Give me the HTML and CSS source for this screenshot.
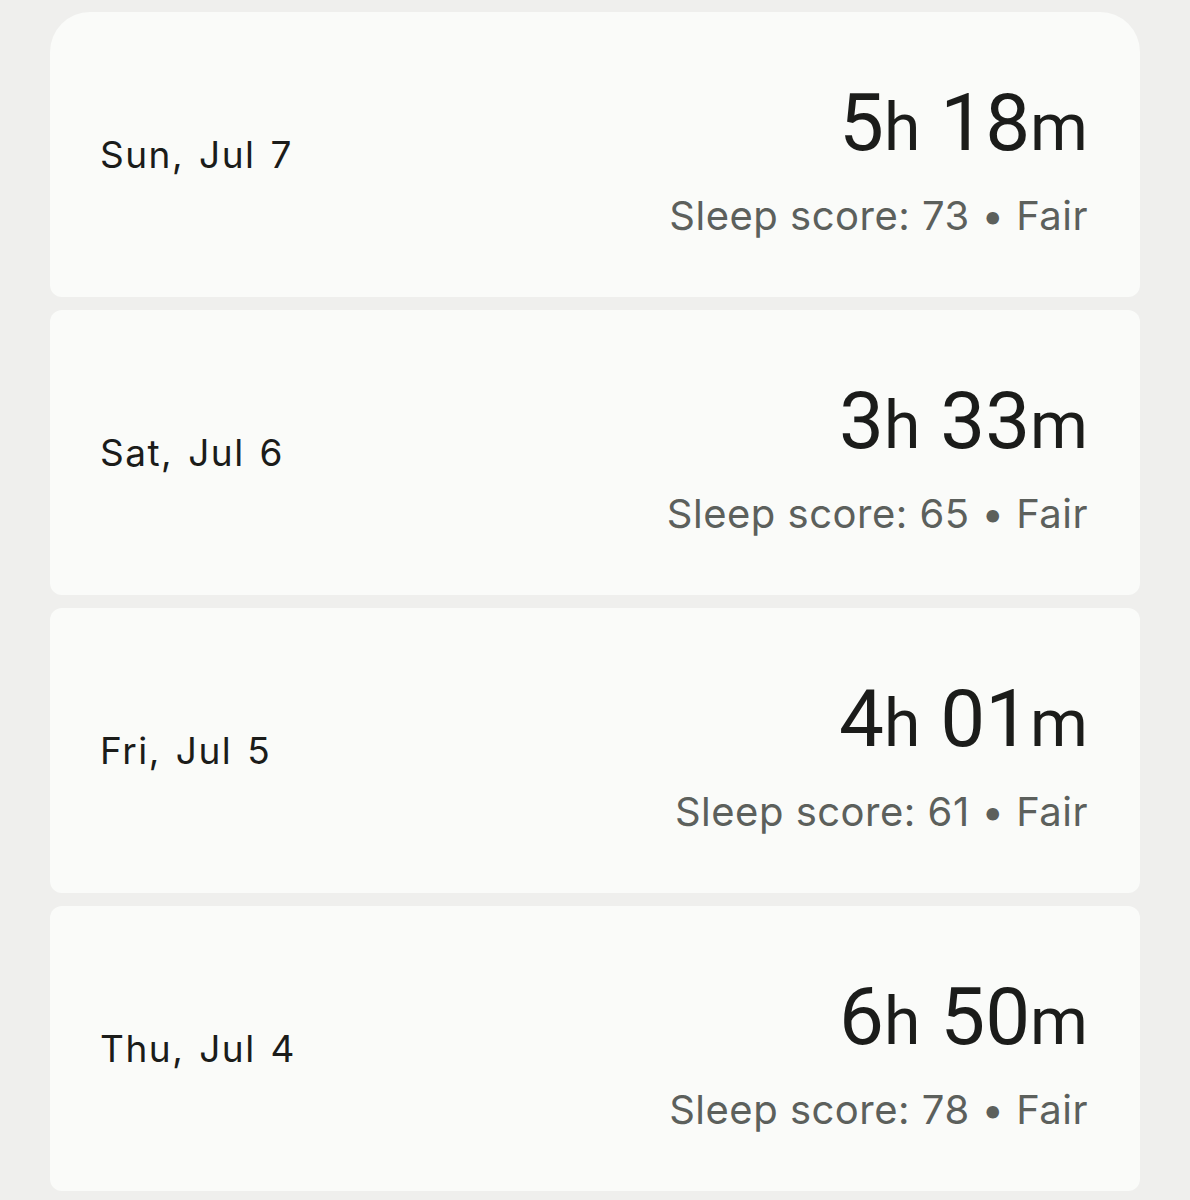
FILE: index.html
```html
<!DOCTYPE html>
<html lang="en">
<head>
  <meta charset="UTF-8">
  <title>Sleep history</title>
  <link rel="stylesheet" href="styles.css">
</head>
<body>

  <div class="sleep-list">
    <div class="night first">
      <div class="night-date">Sun, Jul 7</div>
      <div class="night-info">
        <div class="duration">5<span class="unit">h</span> 18<span class="unit">m</span></div>
        <div class="score">Sleep score: 73 &bull; Fair</div>
      </div>
    </div>

    <div class="night">
      <div class="night-date">Sat, Jul 6</div>
      <div class="night-info">
        <div class="duration">3<span class="unit">h</span> 33<span class="unit">m</span></div>
        <div class="score">Sleep score: 65 &bull; Fair</div>
      </div>
    </div>

    <div class="night">
      <div class="night-date">Fri, Jul 5</div>
      <div class="night-info">
        <div class="duration">4<span class="unit">h</span> 01<span class="unit">m</span></div>
        <div class="score">Sleep score: 61 &bull; Fair</div>
      </div>
    </div>

    <div class="night">
      <div class="night-date">Thu, Jul 4</div>
      <div class="night-info">
        <div class="duration">6<span class="unit">h</span> 50<span class="unit">m</span></div>
        <div class="score">Sleep score: 78 &bull; Fair</div>
      </div>
    </div>
  </div>

</body>
</html>
```

FILE: styles.css
```css
body {
  background: #efefed;
  margin: 0;
  font-family: Inter, Roboto, sans-serif;
  color: #1b1c1a;
}

.sleep-list {
  display: flex;
  flex-direction: column;
  gap: 13px;
  padding: 12px 50px 0 50px;
}

.night {
  background: #fafbf9;
  height: 285px;
  border-radius: 12px;
  display: flex;
  justify-content: space-between;
  align-items: center;
  padding: 0 52px 0 50px;
  box-sizing: border-box;
}

.night.first {
  border-radius: 40px 40px 12px 12px;
}

.night-date {
  font-size: 37px;
  letter-spacing: 1.5px;
  word-spacing: 3px;
}

.night-info {
  display: flex;
  flex-direction: column;
  align-items: flex-end;
  padding-top: 12px;
}

.duration {
  font-family: Roboto, sans-serif;
  font-size: 80px;
  line-height: 80px;
}

.unit {
  font-size: 66px;
}

.score {
  font-size: 40px;
  line-height: 44px;
  letter-spacing: 0.5px;
  margin-top: 26px;
  color: #5c605c;
}
```
